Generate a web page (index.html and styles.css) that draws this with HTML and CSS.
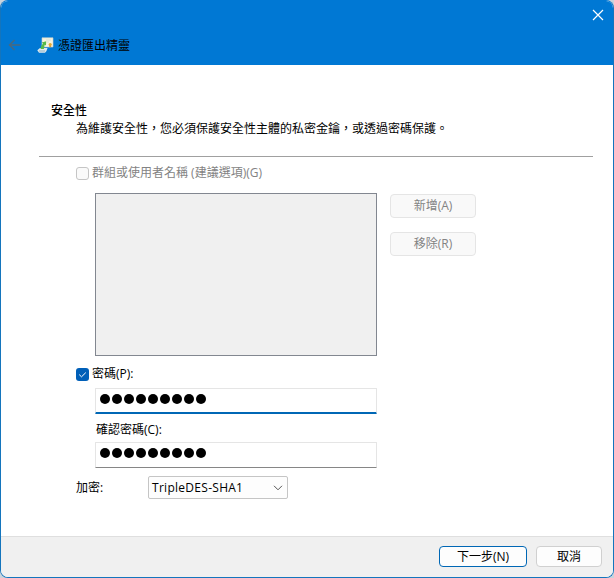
FILE: index.html
```html
<!DOCTYPE html>
<html lang="zh-Hant">
<head>
<meta charset="utf-8">
<title>憑證匯出精靈</title>
<link rel="stylesheet" href="styles.css">
</head>
<body>
<div class="window">
  <header class="titlebar">
    <div class="caption">
      <svg class="close" width="12" height="12" viewBox="0 0 12 12"><path d="M1 1L11 11M11 1L1 11" fill="none" stroke="#fff" stroke-width="1.2"/></svg>
    </div>
    <div class="nav">
      <svg class="back" width="13" height="12" viewBox="0 0 13 12"><path d="M12.5 6H1.5M6.5 1L1.5 6L6.5 11" fill="none" stroke="#4b687c" stroke-width="1.4"/></svg>
      <svg class="icon" width="17" height="17" viewBox="0 0 17 17">
        <path d="M5 .8H16V10H5Z" fill="#f5f3df" stroke="#c9d2cd" stroke-width=".6"/>
        <path d="M9 3H14M10 5H12" stroke="#d6dfd6"/>
        <path d="M0.3 13.2L3 11H10.5L9.5 14L8 15.8H2Z" fill="#dfe9ec"/>
        <path d="M2 14H8" stroke="#91b4c8"/>
        <path d="M3.5 12C4 9 4.5 8 6 6.7L4.8 5.6L9.2 4.2L9 8.6L7.8 7.8C7 9.2 7.6 10.5 6.8 12Z" fill="#55b848"/>
        <circle cx="13.2" cy="7.5" r="1.6" fill="#e5a92e"/>
        <path d="M12.4 8.6L12.2 10.6L13.3 10L14.3 10.6L14 8.6Z" fill="#d49a39"/>
      </svg>
      <h1 class="title">憑證匯出精靈</h1>
    </div>
  </header>
  <main class="page">
    <h2 class="heading">安全性</h2>
    <p class="subheading">為維護安全性，您必須保護安全性主體的私密金鑰，或透過密碼保護。</p>
    <div class="rule"></div>
    <div class="check-row disabled">
      <span class="box"></span><span>群組或使用者名稱 (建議選項)(G)</span>
    </div>
    <div class="principals">
      <div class="list"></div>
      <div class="actions">
        <div class="button disabled">新增(A)</div>
        <div class="button disabled">移除(R)</div>
      </div>
    </div>
    <div class="check-row password">
      <span class="box checked"><svg width="13" height="13" viewBox="0 0 13 13"><path d="M3.2 6.6L5.5 8.8L9.8 4.6" fill="none" stroke="#fff" stroke-width="1"/></svg></span><span>密碼(P):</span>
    </div>
    <div class="field focused"><i></i><i></i><i></i><i></i><i></i><i></i><i></i><i></i><i></i></div>
    <div class="label">確認密碼(C):</div>
    <div class="field"><i></i><i></i><i></i><i></i><i></i><i></i><i></i><i></i><i></i></div>
    <div class="cipher">
      <span class="cipher-label">加密:</span>
      <div class="select"><span>TripleDES-SHA1</span><svg width="10" height="6" viewBox="0 0 10 6"><path d="M1 .8L5 4.8L9 .8" fill="none" stroke="#555" stroke-width="1"/></svg></div>
    </div>
  </main>
  <footer class="footer">
    <div class="button primary">下一步(N)</div>
    <div class="button cancel">取消</div>
  </footer>
</div>
</body>
</html>
```

FILE: styles.css
```css
* { box-sizing: border-box; }
body {
  margin: 0;
  background: #c9d3dc;
  font: 12px/18px "Open Sans", "Noto Sans CJK TC", sans-serif;
  color: #000;
}
.window {
  display: flex;
  flex-direction: column;
  width: 614px;
  height: 578px;
  border: 1px solid #1475bd;
  border-top-color: #0078d4;
  border-radius: 8px;
  overflow: hidden;
  background: #fff;
}
.titlebar { height: 64px; background: #0078d4; flex: none; }
.caption { display: flex; justify-content: flex-end; padding: 8px 9px 0 0; height: 35px; }
.nav { display: flex; align-items: center; height: 18px; padding-left: 7px; }
.icon { margin-left: 16px; }
.title { margin: 2px 0 0 4px; font-size: 12px; font-weight: 400; line-height: 18px; }
.page { flex: 1; padding-top: 37px; }
.heading, .subheading { margin: 0; font-size: 12px; font-weight: 400; line-height: 18px; white-space: nowrap; }
.heading { padding-left: 50px; font-weight: 500; }
.subheading { padding-left: 75px; line-height: 17px; }
.rule { height: 1px; margin: 19px 20px 0 38px; background: #a0a0a0; }
.check-row { display: flex; align-items: center; height: 18px; margin: 7px 0 0 75px; gap: 3px; }
.box { display: block; width: 13px; height: 13px; border: 1px solid #c5c5c5; border-radius: 3px; background: #fafafa; }
.box.checked { border: 0; background: #005fb8; }
.box svg { display: block; }
.disabled { color: #838383; }
.principals { display: flex; margin: 11px 0 0 94px; gap: 13px; }
.list { width: 282px; height: 163px; border: 1px solid #828790; background: #f0f0f0; }
.actions { display: flex; flex-direction: column; gap: 14px; padding-top: 1px; }
.button {
  width: 86px;
  height: 24px;
  border: 1px solid #d0d0d0;
  border-radius: 4px;
  background: #fdfdfd;
  text-align: center;
  line-height: 22px;
}
.button.disabled { border-color: #e5e5e5; background: #f9f9f9; }
.check-row.password { margin-top: 9px; }
.field {
  display: flex;
  gap: 2px;
  width: 282px;
  height: 26px;
  margin-left: 94px;
  padding: 5px 0 0 4px;
  border: 1px solid #e5e5e5;
  border-bottom-color: #868686;
  border-radius: 1px;
}
.field.focused { margin-top: 5px; border-bottom: 2px solid #0067b5; }
.field i { width: 10px; height: 10px; border-radius: 50%; background: #000; }
.label { height: 18px; margin: 7px 0 3px 95px; }
.cipher { display: flex; align-items: center; margin: 8px 0 0 75px; height: 23px; }
.cipher-label { width: 72px; }
.select {
  display: flex;
  align-items: center;
  justify-content: space-between;
  width: 140px;
  height: 23px;
  padding: 0 4px 0 3px;
  border: 1px solid #c5c5c5;
  border-radius: 2px;
  background: #fdfdfd;
  letter-spacing: .28px;
}
.footer {
  display: flex;
  justify-content: flex-end;
  gap: 9px;
  flex: none;
  height: 41px;
  padding: 9px 11px 0 0;
  border-top: 1px solid #dfdfdf;
  background: #f0f0f0;
}
.footer .button { height: 21px; line-height: 19px; }
.footer .primary { width: 88px; border-color: #0067b5; }
.footer .cancel { width: 66px; }
```
